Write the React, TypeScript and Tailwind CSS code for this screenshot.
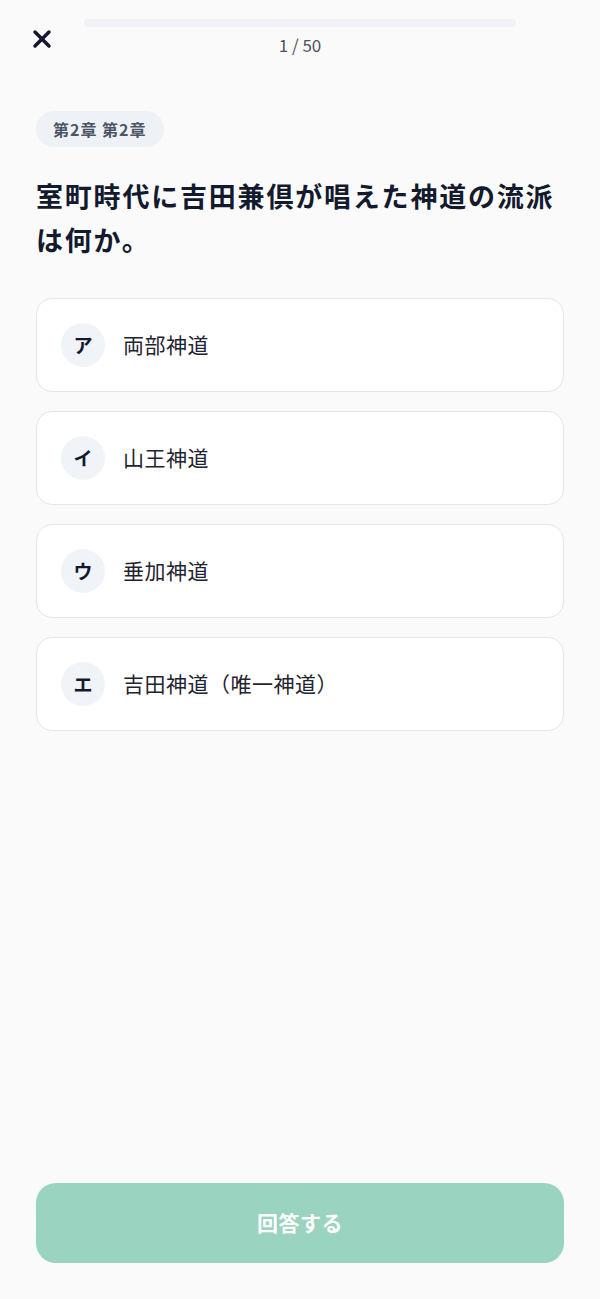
import { X } from 'lucide-react';

const options = [
  { key: 'ア', label: '両部神道' },
  { key: 'イ', label: '山王神道' },
  { key: 'ウ', label: '垂加神道' },
  { key: 'エ', label: '吉田神道（唯一神道）' },
];

const font = { fontFamily: '"Noto Sans CJK JP", "Noto Sans", sans-serif' };

export default function App() {
  return (
    <div className="min-h-[1299px] bg-[#fafafa] flex flex-col text-[#111827]" style={font}>
      {/* Header: close, progress */}
      <div className="flex items-start px-[28px] pt-[19px]">
        <button className="w-[28px] h-[28px] mt-[6px] flex items-center justify-center text-[#141a2e]">
          <X className="w-[28px] h-[28px]" strokeWidth={3} />
        </button>
        <div className="flex-1 flex flex-col items-center ml-[28px] mr-[56px]">
          <div className="w-full h-[8px] rounded-full bg-[#f0f2f5]" />
          <span className="mt-[7px] text-[17px] leading-[22px] text-[#4b5260]">1 / 50</span>
        </div>
      </div>

      <div className="px-[36px] pt-[55px]">
        {/* Chapter chip */}
        <span className="inline-flex items-center h-[36px] px-[17px] rounded-full bg-[#eef2f7] text-[16px] font-bold text-[#4b5565] tracking-[1px]">
          第2章 第2章
        </span>

        {/* Question */}
        <h1 className="mt-[27px] text-[27px] leading-[44px] font-bold text-[#141a2e] tracking-[1.8px]">
          室町時代に吉田兼倶が唱えた神道の流派は何か。
        </h1>

        {/* Options */}
        <div className="mt-[36px] flex flex-col gap-[19px]">
          {options.map((opt) => (
            <button
              key={opt.key}
              className="h-[94px] w-full flex items-center gap-[18px] px-[24px] bg-white border border-[#e4e6ea] rounded-[16px] text-left"
            >
              <span className="w-[44px] h-[44px] rounded-full bg-[#f0f3f8] flex items-center justify-center text-[19px] font-bold text-[#141a2e]">
                {opt.key}
              </span>
              <span className="text-[21px] text-[#1f2430] tracking-[0.5px]">{opt.label}</span>
            </button>
          ))}
        </div>
      </div>

      <div className="flex-1" />

      {/* Submit */}
      <div className="px-[36px] pb-[36px]">
        <button className="w-full h-[80px] rounded-[20px] bg-[#9ad3bf] text-white text-[21px] font-bold tracking-[0.5px]">
          回答する
        </button>
      </div>
    </div>
  );
}
